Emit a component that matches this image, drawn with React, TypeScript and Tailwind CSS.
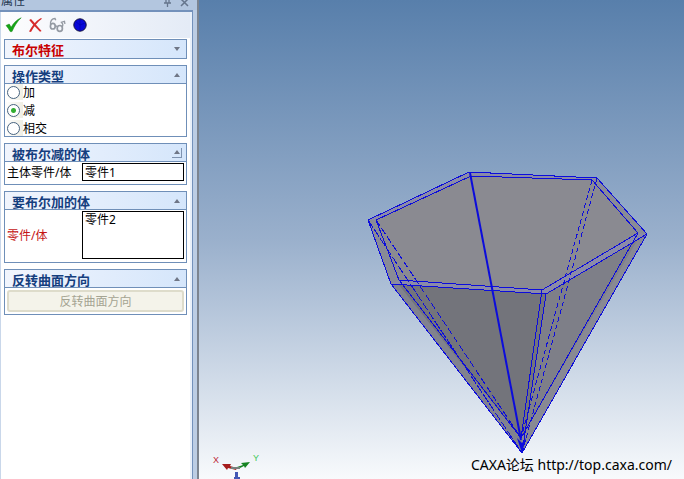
import type { ReactNode } from 'react';

const operations = ['加', '减', '相交'];

type SectionProps = {
  title: string;
  accent?: boolean;
  collapsed?: boolean;
  raised?: boolean;
  children?: ReactNode;
};

function Section({ title, accent, collapsed, raised, children }: SectionProps) {
  return (
    <section className="border border-[#6f8fb8] bg-white">
      <div
        className={`flex h-[18px] items-center justify-between bg-linear-to-r from-[#f1f5fd] to-[#d5e6fb] pl-[7px] ${
          collapsed ? '' : 'border-b border-[#6f8fb8]'
        }`}
      >
        <h2
          className={`pt-[2px] text-[13px] leading-4 font-bold whitespace-nowrap ${
            accent ? 'text-[#c80000]' : 'text-[#153e7e]'
          }`}
        >
          {title}
        </h2>
        <button
          type="button"
          aria-label={title}
          className={`mr-1 flex size-[10px] items-center justify-center ${
            raised ? 'border-r border-b border-[#7f93b0]' : ''
          }`}
        >
          <svg viewBox="0 0 6 4" className="h-[4px] w-[6px]" fill="#6f7686">
            <path d={collapsed ? 'M0 0h6L3 4z' : 'M0 4h6L3 0z'} />
          </svg>
        </button>
      </div>
      {children}
    </section>
  );
}

function Toolbar() {
  return (
    <div className="flex h-[26px] items-center gap-1 bg-linear-to-r from-[#fdfdfe] to-[#e4ebf6] pl-[3px]">
      <button type="button" aria-label="确定" className="size-[18px]">
        <svg viewBox="0 0 18 18">
          <path
            d="M2 9.5 5.2 8 7.2 11.2C9.5 7 12.5 3.8 17.2 1.8 13 5.5 10.2 10.5 8 15.6H6.2C5 13.4 3.8 11.3 2 9.5Z"
            fill="#16a516"
            stroke="#118411"
            strokeWidth=".5"
          />
        </svg>
      </button>
      <button type="button" aria-label="取消" className="size-[18px]">
        <svg viewBox="0 0 18 18" fill="#d62c2c">
          <path d="M3.2 4 5 3C8.5 6.5 11.5 10.5 15.6 15L14 15.8C10 12 6.5 8 3.2 4Z" />
          <path d="M14.5 2.2 16.2 2.6C11.5 6.2 8 10.3 5 16L3 15.6C5.6 10 9.5 5.3 14.5 2.2Z" />
        </svg>
      </button>
      <button type="button" aria-label="预览" className="size-[18px]">
        <svg viewBox="0 0 18 18" fill="none" stroke="#949aa3" strokeWidth="1.7">
          <ellipse cx="4.8" cy="10.2" rx="2.4" ry="2.8" />
          <ellipse cx="11.8" cy="12.4" rx="2.6" ry="2.9" />
          <path d="M7.2 9.5 9.4 10.6M2.5 9C2 5 4 2.5 7 2.5l.8 1.8M14.3 11c1-2 .6-3.5-.8-4.8l3-.8.4 2.6" strokeWidth="1.3" />
        </svg>
      </button>
      <button type="button" aria-label="应用" className="size-[18px]">
        <svg viewBox="0 0 18 18">
          <circle cx="10" cy="9" r="6.2" fill="#0808d8" stroke="#14143c" />
          <path d="M10 3v12M5.5 5.5 10 9l5-2" fill="none" stroke="#0000a8" strokeWidth=".6" />
        </svg>
      </button>
    </div>
  );
}

function PropertyPanel() {
  return (
    <aside className="flex w-[199px] shrink-0 flex-col border-r-2 border-[#7c8490] bg-[#bccde4] text-[12px] text-black">
      <header className="flex h-[10px] items-end justify-between overflow-hidden bg-[#b3c6df] pr-2 pb-[3px] pl-px text-[#24364f]">
        <h1 className="text-[12px] leading-3">属性</h1>
        <div className="flex items-center gap-2">
          <button type="button" aria-label="固定" className="size-[9px]">
            <svg viewBox="0 0 9 9" fill="none" stroke="#65758c" strokeWidth="1.3">
              <path d="M1 5h7M4.5 5v4M3 0v5M6 0v5" />
            </svg>
          </button>
          <button type="button" aria-label="关闭" className="size-[9px]">
            <svg viewBox="0 0 9 9" fill="none" stroke="#65758c" strokeWidth="1.5">
              <path d="m1 1 7 7M8 1 1 8" />
            </svg>
          </button>
        </div>
      </header>
      <div className="mr-1 flex-1 border-t-2 border-r border-[#7391bb] bg-[#e9f0fa] pr-[2px]">
        <div className="h-full border-l border-[#c9d7ea] bg-white">
          <Toolbar />
          <div className="flex flex-col gap-[6px] pt-px pr-[3px] pl-[3px]">
            <Section title="布尔特征" accent collapsed />

            <Section title="操作类型">
              <div className="flex flex-col gap-[2px]">
                {operations.map((name) => (
                  <label key={name} className="flex h-4 items-center">
                    <span className="flex h-4 w-[18px] items-center bg-linear-to-r from-white to-[#efeee4] pl-[2px]">
                      <input
                        type="radio"
                        name="operation"
                        defaultChecked={name === '减'}
                        className="size-[13px] appearance-none rounded-full border border-[#47637f] bg-white checked:bg-[radial-gradient(circle,#2fae2f_0,#35ae35_2px,#ffffff_3px)]"
                      />
                    </span>
                    <span className="pt-[2px] leading-4">{name}</span>
                  </label>
                ))}
              </div>
            </Section>

            <Section title="被布尔减的体" raised>
              <div className="flex items-center pt-px pr-[2px] pb-[3px] pl-[2px]">
                <label htmlFor="body" className="w-[75px] shrink-0 pt-[2px] leading-4">
                  主体零件/体
                </label>
                <input
                  id="body"
                  defaultValue="零件1"
                  className="h-[18px] w-full min-w-0 border border-black bg-white px-[2px] leading-4 outline-none"
                />
              </div>
            </Section>

            <Section title="要布尔加的体">
              <div className="flex items-center pt-px pr-[2px] pb-[3px] pl-[2px]">
                <label htmlFor="tools" className="w-[75px] shrink-0 pt-[2px] leading-4 text-[#c41414]">
                  零件/体
                </label>
                <textarea
                  id="tools"
                  defaultValue="零件2"
                  className="block h-[48px] w-full min-w-0 resize-none border border-black bg-white px-[2px] leading-4 outline-none"
                />
              </div>
            </Section>

            <Section title="反转曲面方向">
              <div className="p-[2px]">
                <button
                  type="button"
                  disabled
                  className="block h-[22px] w-full rounded-[3px] border-2 border-[#dedccb] bg-[#f4f3ea] pt-[2px] leading-4 text-[#a5a492]"
                >
                  反转曲面方向
                </button>
              </div>
            </Section>
          </div>
        </div>
      </div>
    </aside>
  );
}

function Model() {
  return (
    <svg viewBox="199 0 485 479" className="block h-full w-full" role="img" aria-label="零件">
      <path d="M368 220 469 172 597 178 647 234 522 453 391 284Z" fill="#898b96" />
      <path d="M376 220 471 175 592 180 638 233 542 290 399 280Z" fill="#8a8a91" />
      <path d="M391 284 546 294 522 453Z" fill="#73747b" />
      <path d="M546 294 647 234 522 453Z" fill="#7e7f88" />
      <path d="M638 239 647 234 522 453 521 438Z" fill="#888993" />
      <path d="M391 284 399 285 521 438 522 453Z" fill="#81828e" />
      <path
        d="M391 284 399 280 542 290 638 233 647 234 546 294ZM368 220 469 172 471 175 376 220ZM469 172 597 178 592 180 471 175Z"
        fill="#8b8ba8"
      />
      <g fill="none" stroke="#0c0cdc" shapeRendering="crispEdges">
        <path d="M368 220 469 172 597 178 647 234 546 294 391 284Z" />
        <path d="M376 220 471 176 592 180 638 233 542 290 399 280Z" />
        <path d="M391 284 522 453 647 234M399 280 521 438 638 233" />
        <path d="M546 294 522 453M542 290 521 438" />
        <path d="M368 220 522 453" strokeDasharray="9 2" />
        <path d="M376 220 521 438" strokeDasharray="7 3" />
        <path d="M597 178 522 453M592 180 521 438" strokeDasharray="5 3" />
      </g>
      <path d="M470 173 521 440" stroke="#0c0cdc" strokeWidth="2" />
      <path d="m517 438 5 15 4-15-4 5Z" fill="#0c0cdc" />

      <g fontFamily="Liberation Sans, sans-serif" fontSize="9">
        <text x="213" y="463" fill="#bd2635">X</text>
        <text x="253" y="461" fill="#43c95a">Y</text>
      </g>
      <path d="m222 464 9 0-1 2 7 2-1 2-8-2-1 2Z" fill="#a51c1c" />
      <path d="m250 462-5 6-1-2-6 3-1-2 6-2-2-2Z" fill="#158322" />
      <path d="M231 468h9" stroke="#77817e" strokeWidth="2" />
      <path d="M235 472h3v5h2v2h-6v-2h1z" fill="#4257b4" />
    </svg>
  );
}

export default function App() {
  return (
    <div className="flex h-screen overflow-hidden font-['Noto_Sans','Noto_Sans_CJK_SC',sans-serif]">
      <PropertyPanel />
      <main className="relative min-w-0 flex-1 bg-linear-to-b from-[#587fab] via-[#9ab0cc] to-[#f8fafc]">
        <Model />
        <p className="absolute right-3 bottom-1 text-[14px] leading-5 whitespace-nowrap text-black">
          CAXA论坛 <a href="http://top.caxa.com/">http://top.caxa.com/</a>
        </p>
      </main>
    </div>
  );
}
